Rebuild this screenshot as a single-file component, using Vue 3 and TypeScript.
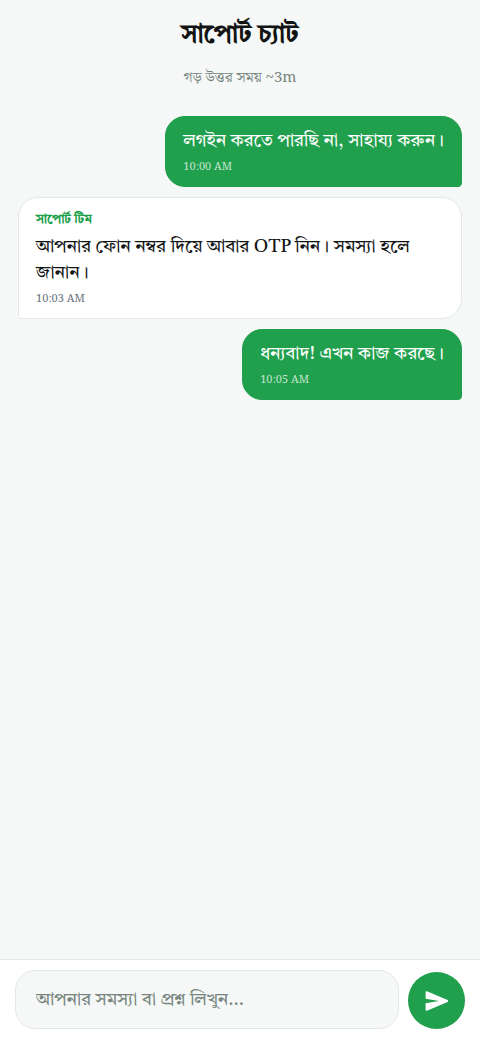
<script setup lang="ts">
import { ref } from 'vue'

interface Message {
  id: number
  mine: boolean
  author?: string
  text: string
  time: string
}

const messages = ref<Message[]>([
  { id: 1, mine: true, text: 'লগইন করতে পারছি না, সাহায্য করুন।', time: '10:00 AM' },
  {
    id: 2,
    mine: false,
    author: 'সাপোর্ট টিম',
    text: 'আপনার ফোন নম্বর দিয়ে আবার OTP নিন। সমস্যা হলে জানান।',
    time: '10:03 AM',
  },
  { id: 3, mine: true, text: 'ধন্যবাদ! এখন কাজ করছে।', time: '10:05 AM' },
])

const draft = ref('')

function send(): void {
  const text = draft.value.trim()
  if (!text) return
  const time = new Date().toLocaleTimeString('en-US', { hour: '2-digit', minute: '2-digit' })
  messages.value.push({ id: messages.value.length + 1, mine: true, text, time })
  draft.value = ''
}
</script>

<template>
  <div class="chat">
    <header class="header">
      <h1 class="title">সাপোর্ট চ্যাট</h1>
      <p class="subtitle">গড় উত্তর সময় ~3m</p>
    </header>

    <main class="messages">
      <article
        v-for="message in messages"
        :key="message.id"
        class="bubble"
        :class="message.mine ? 'mine' : 'theirs'"
      >
        <p v-if="message.author" class="author">{{ message.author }}</p>
        <p class="text">{{ message.text }}</p>
        <time class="time">{{ message.time }}</time>
      </article>
    </main>

    <form class="composer" @submit.prevent="send">
      <input
        v-model="draft"
        class="field"
        type="text"
        aria-label="আপনার সমস্যা বা প্রশ্ন লিখুন"
        placeholder="আপনার সমস্যা বা প্রশ্ন লিখুন..."
      />
      <button class="send" type="submit" aria-label="পাঠান">
        <svg viewBox="0 0 24 20" width="24" height="20" aria-hidden="true">
          <path
            d="M1.9 0.3 22.6 9Q24 10 22.6 11L1.9 19.7Q0.6 20 0.6 18.7V12.3L14 10 0.6 7.7V1.3Q0.6 0 1.9 0.3Z"
            fill="#fff"
          />
        </svg>
      </button>
    </form>
  </div>
</template>

<style>
body {
  margin: 0;
  background: #f5f8f6;
}
</style>

<style scoped>
.chat {
  display: flex;
  flex-direction: column;
  min-height: 100vh;
  background: #f5f8f6;
  color: #111413;
  font-family: "Tiro Bangla", "Noto Serif Bengali", "Noto Serif", serif;
  font-variant-numeric: lining-nums;
}

.header {
  padding: 15px 18px 0;
  text-align: center;
}

.title {
  margin: 0;
  font-size: 26px;
  line-height: 40px;
  font-weight: 700;
}

.subtitle {
  margin: 12px 0 0;
  font-family: "Noto Serif Bengali", "Noto Serif", serif;
  font-size: 15px;
  line-height: 22px;
  color: #76857e;
}

.messages {
  flex: 1;
  display: flex;
  flex-direction: column;
  gap: 10px;
  padding: 27px 18px;
}

.bubble {
  box-sizing: border-box;
  padding: 11px 17px;
  border: 1px solid transparent;
  border-radius: 20px;
}

.mine {
  align-self: flex-end;
  background: #209f4c;
  border-color: #209f4c;
  border-bottom-right-radius: 4px;
  color: #fff;
}

.theirs {
  align-self: flex-start;
  background: #fff;
  border-color: #e2e8e5;
  border-bottom-left-radius: 4px;
}

.author {
  margin: 0 0 4px;
  font-size: 13px;
  line-height: 21px;
  font-weight: 700;
  color: #209f4c;
}

.text {
  margin: 0;
  font-size: 18px;
  line-height: 26px;
}

.time {
  display: block;
  margin-top: 5px;
  font-family: "Noto Serif Bengali", "Noto Serif", serif;
  font-size: 11px;
  line-height: 16px;
  color: #6b7280;
}

.mine .time {
  color: #c2e4cd;
}

.composer {
  display: flex;
  align-items: flex-end;
  gap: 9px;
  padding: 10px 15px 11px;
  border-top: 1px solid #e2e8e5;
  background: #fff;
}

.field {
  flex: 1;
  min-width: 0;
  box-sizing: border-box;
  height: 59px;
  padding: 0 20px;
  border: 1px solid #e2e8e5;
  border-radius: 20px;
  outline: none;
  background: #f5f8f6;
  color: #111413;
  font-family: inherit;
  font-size: 18px;
}

.field::placeholder {
  color: #76857e;
  opacity: 1;
}

.send {
  flex: none;
  display: flex;
  align-items: center;
  justify-content: center;
  width: 57px;
  height: 57px;
  padding: 0;
  border: 0;
  border-radius: 50%;
  background: #209f4c;
  cursor: pointer;
}
</style>
